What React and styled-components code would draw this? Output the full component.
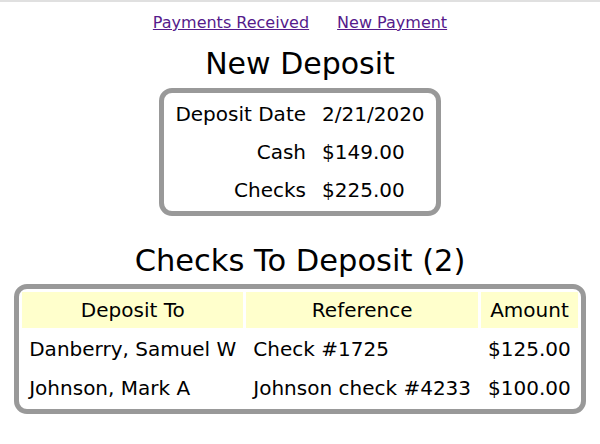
import styled, { createGlobalStyle } from 'styled-components';

const Global = createGlobalStyle`
  body {
    margin: 0;
    font-family: "DejaVu Sans", Verdana, sans-serif;
    color: #000;
    background: #fff;
  }
`

const Page = styled.div`
  border-top: 2px solid #e0e0e0;
  display: flex;
  flex-direction: column;
  align-items: center;
`

const Nav = styled.nav`
  display: flex;
  gap: 28px;
  margin-top: 11px;
  font-size: 16px;

  > a {
    color: #551a8b;
    text-decoration: underline;
  }
`

const Title = styled.h1`
  font-size: ${p => p.$size || '30px'};
  font-weight: normal;
  margin: ${p => p.$top || '14px'} 0 ${p => p.$bottom || '7px'};
`

const Box = styled.div`
  border: 5px solid #999;
  border-radius: 13px;
  padding: ${p => p.$pad || '2px 1px'};
`

const Summary = styled.table`
  border-spacing: 0;
  font-size: 20px;

  td {
    padding: 7px 8px;
  }
  td:first-child {
    text-align: right;
    padding-left: 10px;
  }
  td:last-child {
    padding-right: 10px;
  }
`

const Grid = styled.table`
  border-spacing: 3px;
  font-size: 20px;

  th {
    background: #ffffcc;
    font-weight: normal;
    height: 36px;
    padding: 0 7px;
  }
  td {
    height: 36px;
    padding: 0 7px;
    text-align: left;
  }
  td:last-child {
    text-align: right;
  }
`

const checks = [
  { name: 'Danberry, Samuel W', ref: 'Check #1725', amount: '$125.00' },
  { name: 'Johnson, Mark A', ref: 'Johnson check #4233', amount: '$100.00' },
]

function App() {
  return (
    <Page>
      <Global />
      <Nav>
        <a href="#received">Payments Received</a>
        <a href="#new">New Payment</a>
      </Nav>
      <Title>New Deposit</Title>
      <Box>
        <Summary>
          <tbody>
            <tr><td>Deposit Date</td><td>2/21/2020</td></tr>
            <tr><td>Cash</td><td>$149.00</td></tr>
            <tr><td>Checks</td><td>$225.00</td></tr>
          </tbody>
        </Summary>
      </Box>
      <Title $top="27px" $bottom="6px" $size="30.5px">Checks To Deposit ({checks.length})</Title>
      <Box $pad="0">
        <Grid>
          <thead>
            <tr><th>Deposit To</th><th>Reference</th><th>Amount</th></tr>
          </thead>
          <tbody>
            {checks.map(c => (
              <tr key={c.ref}><td>{c.name}</td><td>{c.ref}</td><td>{c.amount}</td></tr>
            ))}
          </tbody>
        </Grid>
      </Box>
    </Page>
  )
}

export default App;
